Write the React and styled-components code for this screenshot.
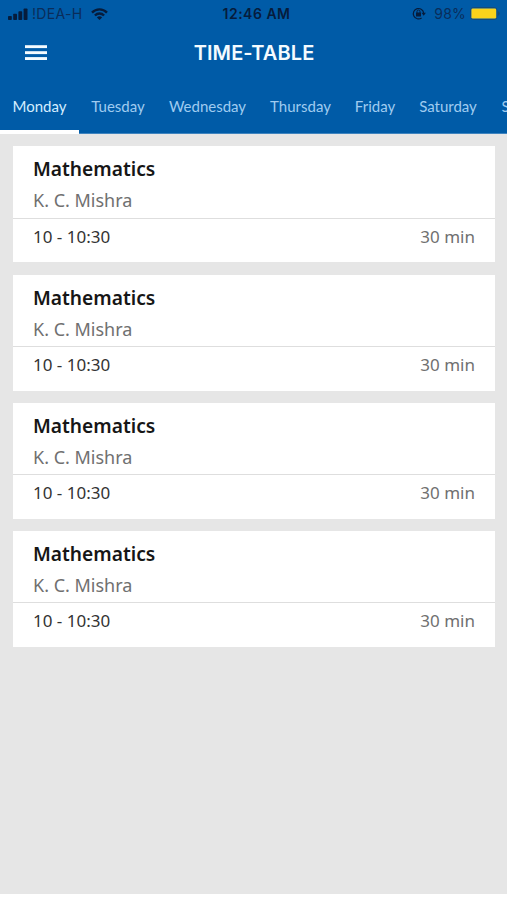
import React from 'react';
import styled, { createGlobalStyle } from 'styled-components';

const days = [
    { name: 'Monday', width: 79 },
    { name: 'Tuesday', width: 78 },
    { name: 'Wednesday', width: 101 },
    { name: 'Thursday', width: 85 },
    { name: 'Friday', width: 64 },
    { name: 'Saturday', width: 82 },
    { name: 'Sunday', width: 73 },
];

const lessons = [1, 2, 3, 4].map((id) => ({
    id,
    subject: 'Mathematics',
    teacher: 'K. C. Mishra',
    time: '10 - 10:30',
    duration: '30 min',
}));

const SignalIcon = () => (
    <svg width="20" height="12" viewBox="0 0 20 12" fill="currentColor">
        <rect x="0" y="8" width="3.8" height="4" rx="0.8" />
        <rect x="5.2" y="5.8" width="3.8" height="6.2" rx="0.8" />
        <rect x="10.4" y="3.2" width="3.8" height="8.8" rx="0.8" />
        <rect x="15.6" y="0.4" width="3.9" height="11.6" rx="0.8" />
    </svg>
);

const WifiIcon = () => (
    <svg width="17" height="12" viewBox="0 0 17 12" fill="none" stroke="currentColor" strokeWidth="2.4">
        <path d="M1 4.6C5.2 0.3 11.8 0.3 16 4.6" />
        <path d="M3.9 7.5C6.5 4.9 10.5 4.9 13.1 7.5" />
        <path d="M8.5 12L5.9 9.4C7.4 8 9.6 8 11.1 9.4Z" fill="currentColor" stroke="none" />
    </svg>
);

const LockIcon = () => (
    <svg width="14" height="13" viewBox="0 0 14 13" fill="none" stroke="currentColor" strokeWidth="1.2">
        <path d="M9.6 10.9A5.2 5.2 0 1 1 11.7 6.3" />
        <path d="M9.5 5.8H13.9L11.7 8.8Z" fill="currentColor" stroke="none" />
        <rect x="4" y="5.6" width="5" height="4" rx="0.5" fill="currentColor" stroke="none" />
        <path d="M5 6V4.5a1.5 1.5 0 0 1 3 0V6" strokeWidth="1" />
    </svg>
);

const BatteryIcon = () => (
    <svg width="30" height="13" viewBox="0 0 30 13">
        <rect x="0.5" y="0.5" width="26.5" height="12" rx="3" fill="none" stroke="#174a78" />
        <rect x="1.4" y="1.4" width="24.8" height="10.2" rx="1.4" fill="#fad31b" />
        <path d="M28 4.2a2.4 2.4 0 0 1 0 4.6Z" fill="#174a78" />
    </svg>
);

const MenuIcon = () => (
    <svg width="22" height="16" viewBox="0 0 22 16" fill="#f4fbff">
        <rect x="0" y="0.2" width="22" height="2.9" />
        <rect x="0" y="6.2" width="22" height="2.9" />
        <rect x="0" y="12.1" width="22" height="2.9" />
    </svg>
);

const Lesson = ({ subject, teacher, time, duration }) => (
    <Card>
        <CardHead>
            <Subject>{subject}</Subject>
            <Teacher>{teacher}</Teacher>
        </CardHead>
        <CardFoot>
            <Time>{time}</Time>
            <Duration>{duration}</Duration>
        </CardFoot>
    </Card>
);

export default () => (
    <Screen>
        <GlobalStyle />
        <Header>
            <StatusBar>
                <Carrier>
                    <SignalIcon />
                    <CarrierName>!DEA-H</CarrierName>
                    <WifiIcon />
                </Carrier>
                <Clock>12:46 AM</Clock>
                <Power>
                    <LockIcon />
                    <Percent>98%</Percent>
                    <BatteryIcon />
                </Power>
            </StatusBar>
            <TitleBar>
                <MenuButton aria-label="Menu">
                    <MenuIcon />
                </MenuButton>
                <Title>TIME-TABLE</Title>
            </TitleBar>
            <Tabs>
                {days.map(({ name, width }, index) => (
                    <Tab key={name} $width={width} $active={index === 0}>
                        {name}
                    </Tab>
                ))}
            </Tabs>
        </Header>
        <List>
            {lessons.map(({ id, ...lesson }) => (
                <Lesson key={id} {...lesson} />
            ))}
        </List>
    </Screen>
);

const GlobalStyle = createGlobalStyle`
    * {
        box-sizing: border-box;
    }

    body {
        margin: 0;
        background: #fff;
    }

    svg {
        display: block;
        flex: none;
    }
`;

const Screen = styled.div`
    display: flex;
    flex-flow: column;
    height: 894px;
    overflow: hidden;
    background: #e6e6e6;
    font-family: 'Noto Sans', sans-serif;
`;

const Header = styled.header`
    flex: none;
    height: 134px;
    background: #005ba7;
`;

const StatusBar = styled.div`
    display: grid;
    grid-template-columns: 1fr auto 1fr;
    align-items: center;
    height: 27px;
    padding: 0 8px;
    color: #061c3c;
    font-family: Inter, sans-serif;
    font-size: 13.5px;
    line-height: 27px;
`;

const Carrier = styled.div`
    display: flex;
    align-items: center;
`;

const CarrierName = styled.span`
    width: 51px;
    margin: 0 7.5px 0 4px;
    color: #0a2d5a;
    font-size: 14px;
    letter-spacing: 0.3px;
    white-space: nowrap;
`;

const Clock = styled.span`
    padding-left: 6px;
    font-size: 14px;
    font-weight: 600;
    letter-spacing: 0.5px;
`;

const Power = styled.div`
    display: flex;
    align-items: center;
    justify-content: flex-end;
    margin-right: -1px;
`;

const Percent = styled.span`
    margin: 0 4px 0 8px;
    color: #0a2d5a;
    font-size: 14px;
    letter-spacing: 0.2px;
`;

const TitleBar = styled.div`
    display: grid;
    grid-template-columns: 72px 1fr 71px;
    align-items: center;
    height: 52px;
`;

const MenuButton = styled.button`
    display: flex;
    padding: 0 0 0 25px;
    border: 0;
    background: none;
`;

const Title = styled.h1`
    margin: 0;
    color: #f4fbff;
    font-family: Inter, sans-serif;
    font-size: 20px;
    font-weight: 600;
    letter-spacing: 0.1px;
    line-height: 51px;
    text-align: center;
`;

const Tabs = styled.nav`
    display: flex;
    height: 55px;
    overflow: hidden;
`;

const Tab = styled.a`
    flex: none;
    width: ${({ $width }) => $width}px;
    height: 55px;
    border-bottom: ${({ $active }) => ($active ? '4px solid #fff' : '1px solid #3f84bf')};
    color: ${({ $active }) => ($active ? '#d3edff' : '#9fcbf0')};
    font-family: Lato, sans-serif;
    font-size: 15px;
    line-height: 54px;
    text-align: center;
    white-space: nowrap;
`;

const List = styled.main`
    display: flex;
    flex-flow: column;
    gap: 12.3px;
    padding: 12.4px 12px 0 13px;
`;

const Card = styled.article`
    height: 116px;
    background: #fff;
`;

const CardHead = styled.div`
    height: 72.2px;
    padding: 8px 20px 0;
    border-bottom: 1px solid #dedede;
`;

const Subject = styled.h2`
    margin: 0;
    color: #161616;
    font-size: 19.2px;
    font-weight: 600;
    line-height: 30px;
`;

const Teacher = styled.div`
    color: #707070;
    font-size: 18px;
    line-height: 32px;
`;

const CardFoot = styled.div`
    display: flex;
    justify-content: space-between;
    padding: 0 20px;
    font-size: 17px;
    line-height: 36px;
`;

const Time = styled.span`
    color: #333;
`;

const Duration = styled.span`
    color: #707070;
`;
